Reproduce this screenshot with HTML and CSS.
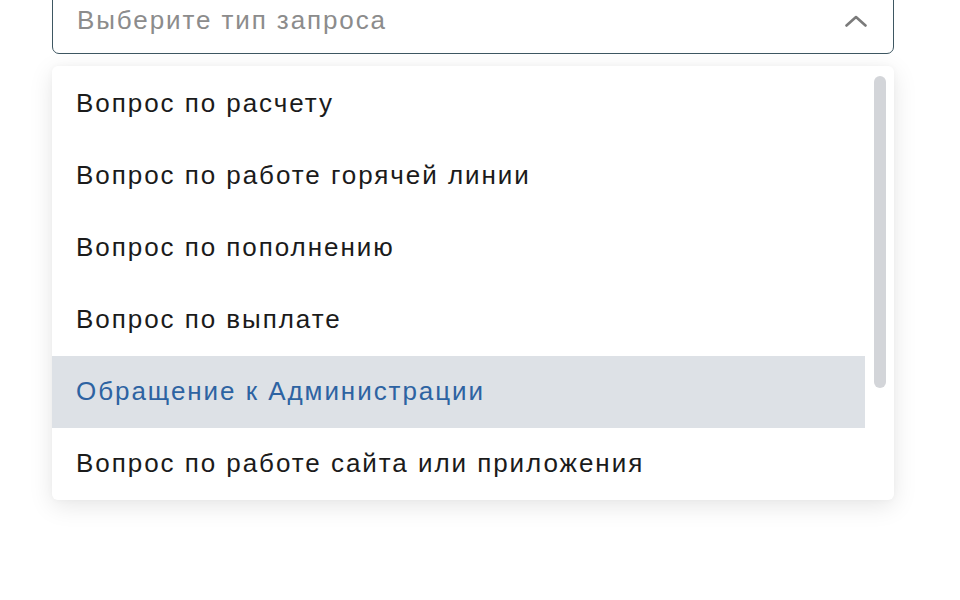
FILE: index.html
```html
<!DOCTYPE html>
<html lang="ru">
<head>
<meta charset="utf-8">
<link rel="stylesheet" href="styles.css">
</head>
<body>
<div class="field">
  <div class="select">
    <span class="placeholder">Выберите тип запроса</span>
    <svg class="chevron" width="22" height="12" viewBox="0 0 22 12"><path d="M1.5 10.5 L11 2 L20.5 10.5" fill="none" stroke="#7b7b7b" stroke-width="2.6" stroke-linecap="round" stroke-linejoin="round"/></svg>
  </div>
  <div class="dropdown">
    <ul class="options">
      <li class="option">Вопрос по расчету</li>
      <li class="option">Вопрос по работе горячей линии</li>
      <li class="option">Вопрос по пополнению</li>
      <li class="option">Вопрос по выплате</li>
      <li class="option active">Обращение к Администрации</li>
      <li class="option">Вопрос по работе сайта или приложения</li>
    </ul>
    <div class="scrolltrack"><div class="thumb"></div></div>
  </div>
</div>
</body>
</html>
```
FILE: styles.css
```css
* { box-sizing: border-box; }
html, body { margin: 0; padding: 0; background: #ffffff; }
body {
  font-family: "Liberation Sans", Arial, sans-serif;
  width: 960px;
  height: 600px;
  overflow: hidden;
}
.field {
  margin: -20px 0 0 52px;
  width: 842px;
}
.select {
  height: 74px;
  border: 1.5px solid #3e5762;
  border-radius: 7px;
  display: flex;
  align-items: center;
  justify-content: space-between;
  padding: 7px 26px 0 24px;
  background: #fff;
}
.placeholder {
  font-size: 26px;
  letter-spacing: 1.9px;
  color: #8c8c8c;
}
.chevron { display: block; margin-top: 1px; }
.dropdown {
  margin-top: 12px;
  height: 434px;
  background: #fff;
  border-radius: 6px;
  box-shadow: 0 6px 24px rgba(0,0,0,0.10), 0 0 6px rgba(0,0,0,0.03);
  display: flex;
  padding-top: 2px;
}
.options {
  list-style: none;
  margin: 0;
  padding: 0;
  flex: 1;
}
.option {
  height: 72px;
  display: flex;
  align-items: center;
  padding: 0 0 1px 24px;
  font-size: 26px;
  letter-spacing: 1.95px;
  color: #1b1b1b;
}
.option.active {
  background: #dde1e6;
  color: #2d63a2;
}
.scrolltrack {
  width: 29px;
  padding: 8px 8px 0 9px;
}
.thumb {
  width: 12px;
  height: 312px;
  border-radius: 6px;
  background: #d3d5d9;
}
```
